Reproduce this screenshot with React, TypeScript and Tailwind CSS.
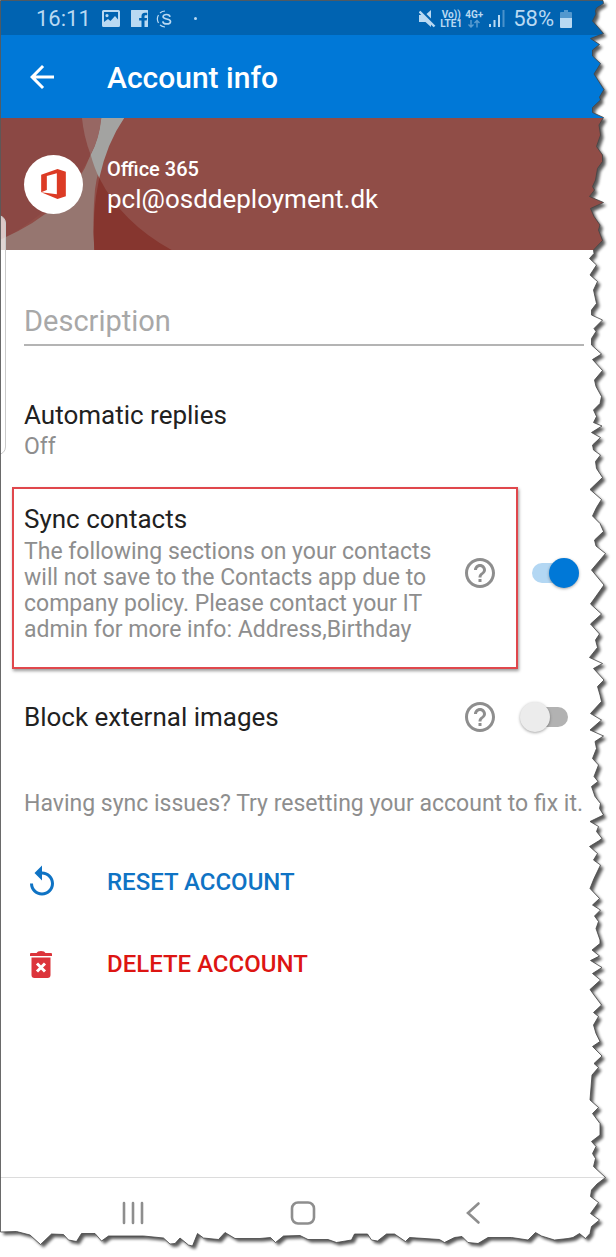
import { useState } from "react";
import { MdArrowBack, MdHelpOutline, MdReplay } from "react-icons/md";

const TORN_EDGE =
  "0.5,0.5 603,0.5 603.5,3.5 596.5,8 595.5,11 596,14 592.5,21 597,26 603.5,33.5 590.5,38.5 599.5,44.5 592.5,50 592.5,56 600.5,63.5 594,74 604,89.5 599.5,97 600.5,100 592.5,107.5 592.5,112.5 603.5,117.5 599,125 600.5,135 596.5,146.5 602.5,155 602.5,161.5 597.5,168.5 595.5,180 592.5,186.5 594.5,190 589.5,196.5 603.5,202.5 590.5,208.5 594,216.5 600,225 598.5,230 602.5,240.5 593.5,250 594,253.5 589.5,258.5 596.5,265 590,275 597.5,281.5 593.5,290 596.5,303.5 591.5,310 591.5,315 602.5,320 594,328.5 596,331.5 591.5,338.5 591.5,345 601.5,354 592.5,359.5 602.5,370.5 594.5,380 596,386.5 601.5,396.5 600,403.5 593.5,410 596.5,416.5 593.5,422.5 602,426 591.5,432.5 600.5,437.5 592.5,445 593.5,450 600.5,455 595.5,461.5 596.5,468.5 602.5,477.5 590,489.5 601.5,499.5 596.5,507.5 592.5,516 600,523.5 603.5,531.5 594.5,540 596,546 605.5,553.5 591.5,570 604,585 590.5,604 601.5,614 590.5,624 599.5,634 595.5,640 597.5,647.5 589.5,657.5 602.5,663.5 593.5,668.5 604,680 597.5,686.5 600,695 601.5,701.5 590.5,713.5 601.5,720 590,730 603.5,736 595,741.5 596.5,748.5 592.5,758.5 598.5,765 594,776.5 598,781.5 591.5,786.5 595,796.5 600.5,803.5 599.5,808.5 603.5,815 590,821.5 598.5,826.5 596.5,831.5 602,838.5 598.5,841 589.5,846.5 597.5,853.5 593.5,860 600.5,865 594,878.5 590,888.5 599.5,898.5 592.5,905 600.5,910 594.5,916 598.5,921.5 596,928.5 600,940 600,943.5 592,950 599.5,956 590.5,960.5 602,967.5 592.5,973.5 600.5,980 590,989.5 594,995 601.5,1005 593.5,1012.5 598.5,1016.5 593.5,1025 596,1033.5 600,1041.5 592.5,1046.5 602,1056 594,1063.5 598.5,1067.5 592,1075 590,1100 598.5,1107.5 592.5,1113.5 600,1123.5 600,1135 591.5,1141.5 596,1146.5 592.5,1153.5 595.5,1158.5 593.5,1166.5 605.5,1177.5 597,1184 591.5,1190 590.5,1196.5 598.5,1202.5 590.5,1213.5 599.5,1220 591.5,1226.5 590,1233.5 585.5,1238.5 579.5,1233.5 573,1237.5 568,1238.5 554.5,1240 541.5,1236 535.5,1232.5 528,1240 511.5,1237.5 488,1237.5 478,1243.5 468,1242.5 462,1236.5 454.5,1237.5 444.5,1242.5 439.5,1239.5 409.5,1237.5 405.5,1241.5 394.5,1234 386.5,1234 377.5,1241 371.5,1240 367.5,1234 354.5,1234 351.5,1240 336.5,1242.5 328,1239.5 308,1239.5 300,1235.5 283.5,1236 275.5,1242.5 270.5,1237.5 260,1238.5 235,1238.5 225,1232.5 218.5,1239.5 203.5,1238 197.5,1233.5 192.5,1246 188.5,1245 180,1238 175,1243.5 170,1244 163.5,1238 143.5,1236 108.5,1236 101.5,1241 95,1233.5 81.5,1233.5 76.5,1241.5 68.5,1240 63.5,1234.5 51.5,1234 40.5,1244.5 30,1235 16.5,1231.5 0.5,1232";

function TornEdge() {
  return (
    <svg
      className="pointer-events-none absolute inset-0 h-full w-full"
      viewBox="0 0 616 1257"
      preserveAspectRatio="none"
      aria-hidden="true"
    >
      <defs>
        <mask id="outside">
          <rect width="616" height="1257" fill="white" />
          <polygon points={TORN_EDGE} fill="black" />
        </mask>
        <filter id="soft" x="-5%" y="-5%" width="110%" height="110%">
          <feGaussianBlur stdDeviation="1.8" />
        </filter>
      </defs>
      <g mask="url(#outside)">
        <rect width="616" height="1257" fill="white" />
        <polygon points={TORN_EDGE} fill="#000" opacity="0.65" filter="url(#soft)" transform="translate(3 3)" />
      </g>
      <polygon points={TORN_EDGE} fill="none" stroke="#444" strokeWidth="0.8" />
    </svg>
  );
}

function StatusBar() {
  return (
    <div className="flex h-[35px] items-center justify-between bg-[#0063b1] pl-9 pr-11 pt-0.5 text-[#b9d9f2]">
      <div className="flex items-center">
        <span className="w-[54px] text-[22px]">16:11</span>
        <svg className="ml-3 h-[17px] w-[18px]" viewBox="0 0 18 17" aria-hidden="true">
          <path
            fill="currentColor"
            fillRule="evenodd"
            d="M1.500 0h15A1.500 1.500 0 0 1 18 1.500v14a1.500 1.500 0 0 1-1.500 1.500h-15A1.500 1.500 0 0 1 0 15.500v-14A1.500 1.500 0 0 1 1.500 0zM2 2v10l4-3 2.500 2L13 6l3 3.500V2zM5 4a1.600 1.600 0 1 1 0 3.200A1.600 1.600 0 0 1 5 4z"
          />
        </svg>
        <svg className="ml-[11px] h-[17px] w-[17px]" viewBox="0 0 17 17" aria-hidden="true">
          <path
            fill="currentColor"
            d="M.5 0h16a.5.5 0 0 1 .5.500v16a.5.5 0 0 1-.5.500h-3v-6.500h2.200l.4-2.600h-2.600V6.600c0-.9.400-1.300 1.300-1.300h1.400V2.700H14C11.500 2.700 10.500 4 10.500 6.200v1.700H8.100v2.600h2.400V17H.5a.5.5 0 0 1-.5-.500V.5A.5.500 0 0 1 .5 0z"
          />
        </svg>
        <svg
          className="ml-2 h-[18px] w-[18px]"
          viewBox="0 0 18 18"
          fill="none"
          stroke="currentColor"
          aria-hidden="true"
        >
          <path d="M9 1a8 8 0 0 0-5 2M2.500 5a8 8 0 0 0 0 8M4 15a8 8 0 0 0 5 2" strokeWidth="1.200" />
          <path
            d="M14 6.800c-.2-1.500-1.500-2.300-3.500-2.300-2.200 0-3.400 1-3.400 2.300 0 3 7.400 1.400 7.400 4.600 0 1.500-1.500 2.500-3.800 2.500-2.200 0-3.700-.9-3.900-2.600"
            strokeWidth="1.700"
          />
        </svg>
        <span className="ml-5 h-[3px] w-[3px] rounded-full bg-current" />
      </div>
      <div className="flex items-center">
        <svg className="mr-1 h-[18px] w-[17px]" viewBox="0 0 17 18" fill="currentColor" aria-hidden="true">
          <path d="M12 0v8.500L7.500 4z" />
          <path d="M0 5h3.500L12 13.500V17L6.500 12H0z" />
          <path d="M.5 1.500L15.500 16.500" stroke="currentColor" strokeWidth="2.400" />
        </svg>
        <div className="flex flex-col text-[10px] leading-[9px] font-bold">
          <span className="text-center">Vo))</span>
          <span>LTE1</span>
        </div>
        <div className="ml-[3px] flex flex-col items-center">
          <span className="text-[10px] leading-[9px] font-bold">4G+</span>
          <svg
            className="h-[9px] w-[14px] opacity-50"
            viewBox="0 0 14 9"
            fill="none"
            stroke="currentColor"
            strokeWidth="1.400"
            aria-hidden="true"
          >
            <path d="M4 1v7M1.500 5.500L4 8l2.500-2.500M10 8.500V1.500M7.500 4L10 1.500 12.500 4" />
          </svg>
        </div>
        <svg className="ml-1.5 h-[17px] w-4" viewBox="0 0 16 17" fill="currentColor" aria-hidden="true">
          <path d="M0 14h2v3H0zM4.500 10h2v7h-2zM9 5h2v12H9z" />
          <path d="M13.500 0h2v17h-2z" opacity="0.4" />
        </svg>
        <span className="ml-2 text-[22px]">58%</span>
        <svg className="ml-1.5 h-[18px] w-3" viewBox="0 0 12 18" fill="currentColor" aria-hidden="true">
          <path d="M4 0h4v2h3a1 1 0 0 1 1 1v5H0V3a1 1 0 0 1 1-1h3z" opacity="0.45" />
          <path d="M0 8h12v9a1 1 0 0 1-1 1H1a1 1 0 0 1-1-1z" />
        </svg>
      </div>
    </div>
  );
}

function AccountBanner() {
  return (
    <section className="relative flex h-[132px] items-center bg-[#904d47] pl-6 text-white">
      <svg className="absolute left-0 top-0 h-full w-[308px]" viewBox="0 24 924 398" aria-hidden="true">
        <path d="M0 24H303Q285 220 18 384L0 390z" fill="#8b4844" />
        <path d="M303 24H372Q300 120 284 240Q276 330 282 422H0V390Q210 300 271 135Q298 85 303 24z" fill="#967670" />
        <path d="M303 24H372Q320 100 297 205Q282 175 271 135Q295 90 303 24z" fill="#a3a3a1" />
        <path d="M245 24H303Q298 85 271 135Q250 80 245 24z" fill="#976763" />
        <path d="M297 205Q365 340 515 422H282Q274 310 297 205z" fill="#86362f" />
      </svg>
      <div className="relative flex h-[59px] w-[59px] items-center justify-center rounded-full bg-white">
        <svg className="h-[30px] w-[25px]" viewBox="123 178 74 90" aria-hidden="true">
          <path
            fill="#dc3b25"
            d="M123 195L172 178L197 186V260L172 268L123 248L170 254V191L140 199V241L123 248z"
          />
        </svg>
      </div>
      <div className="relative ml-6 pt-1.5">
        <p className="text-[20px] leading-6 font-medium">Office 365</p>
        <p className="text-[26px] leading-9">pcl@osddeployment.dk</p>
      </div>
    </section>
  );
}

function Switch({ id, checked, onChange }) {
  return (
    <input
      id={id}
      type="checkbox"
      role="switch"
      checked={checked}
      onChange={(e) => onChange(e.target.checked)}
      className="relative h-[30px] w-[60px] shrink-0 cursor-pointer appearance-none before:absolute before:left-2 before:top-[5px] before:h-5 before:w-10 before:rounded-full before:bg-[#b2b2b2] after:absolute after:left-0 after:top-0 after:h-[30px] after:w-[30px] after:rounded-full after:bg-[#ececec] after:shadow-[0_1px_3px_rgba(0,0,0,0.35)] checked:before:left-3 checked:before:bg-[#b3d7f3] checked:after:left-[29px] checked:after:bg-[#0078d7]"
    />
  );
}

function HelpButton({ label }) {
  return (
    <button type="button" aria-label={label} className="mr-[22px] shrink-0 text-[#8e8e8e]">
      <MdHelpOutline className="h-9 w-9" />
    </button>
  );
}

function NavBar() {
  return (
    <nav className="mt-auto flex h-20 items-start justify-center gap-36 border-t border-[#dcdcdc] pr-2.5 pt-[22px] text-[#8e8e8e]">
      <button type="button" aria-label="Recent apps">
        <svg className="h-[26px] w-[26px]" viewBox="0 0 26 26" stroke="currentColor" strokeWidth="2.600" strokeLinecap="round">
          <path d="M4 3v20M13 3v20M22 3v20" />
        </svg>
      </button>
      <button type="button" aria-label="Home">
        <svg className="h-[26px] w-[26px]" viewBox="0 0 26 26" fill="none" stroke="currentColor" strokeWidth="2.600">
          <rect x="2" y="2.500" width="22" height="21" rx="6" />
        </svg>
      </button>
      <button type="button" aria-label="Back">
        <svg className="h-[26px] w-[26px]" viewBox="0 0 26 26" fill="none" stroke="currentColor" strokeWidth="2.600" strokeLinecap="round">
          <path d="M18.500 3.500L8 13l10.500 9.500" />
        </svg>
      </button>
    </nav>
  );
}

function App() {
  const [description, setDescription] = useState("");
  const [syncContacts, setSyncContacts] = useState(true);
  const [blockImages, setBlockImages] = useState(false);

  return (
    <div className="relative flex min-h-screen w-full flex-col overflow-hidden bg-white font-[Roboto,sans-serif] text-[#212121]">
      <StatusBar />

      <header className="flex h-[83px] items-center bg-[#0078d7] pl-6 text-white">
        <button type="button" aria-label="Back to settings" className="w-[83px]">
          <MdArrowBack className="h-9 w-9" />
        </button>
        <h1 className="pt-0.5 text-[30px] font-medium">Account info</h1>
      </header>

      <AccountBanner />

      {/* Edge panel handle */}
      <div className="absolute -left-1 top-[215px] h-60 w-[10px] rounded-r-lg border border-[#c9c9c9] bg-white/70" />

      <main className="flex flex-col pl-6 pr-8">
        <input
          type="text"
          aria-label="Description"
          placeholder="Description"
          value={description}
          onChange={(e) => setDescription(e.target.value)}
          className="mt-12 h-12 border-b-2 border-[#b4b4b4] text-[29px] outline-none placeholder:text-[#a8a8a8]"
        />

        <section className="mt-[53px]">
          <h2 className="text-[26px] leading-8">Automatic replies</h2>
          <p className="text-[23px] leading-8 text-[#8e8e8e]">Off</p>
        </section>

        <section className="relative mt-10 flex items-center pr-1">
          {/* Highlight frame */}
          <div className="pointer-events-none absolute -left-3 -top-4 -bottom-[26px] right-[66px] border-2 border-[#e0474c] shadow-[1px_2px_3px_rgba(0,0,0,0.4)]" />
          <div className="flex-1">
            <label htmlFor="sync" className="block text-[26px] leading-8">
              Sync contacts
            </label>
            <p className="mt-1 max-w-[420px] text-[23px] leading-[26px] text-[#8e8e8e]">
              The following sections on your contacts will not save to the Contacts app due to company policy.
              Please contact your IT admin for more info: Address,Birthday
            </p>
          </div>
          <HelpButton label="About contact sync" />
          <Switch id="sync" checked={syncContacts} onChange={setSyncContacts} />
        </section>

        <section className="mt-14 flex items-center pr-1">
          <label htmlFor="images" className="flex-1 text-[26px] leading-8">
            Block external images
          </label>
          <HelpButton label="About external images" />
          <Switch id="images" checked={blockImages} onChange={setBlockImages} />
        </section>

        <p className="mt-[53px] whitespace-nowrap text-[23px] leading-8 text-[#8e8e8e]">
          Having sync issues? Try resetting your account to fix it.
        </p>

        <button type="button" className="mt-[42px] flex h-10 items-center text-[24px] font-medium text-[#0f73c4]">
          <span className="w-[83px]">
            <MdReplay className="h-9 w-9" />
          </span>
          RESET ACCOUNT
        </button>
        <button type="button" className="mt-[42px] flex h-10 items-center text-[24px] font-medium text-[#dd1512]">
          <span className="w-[83px] pl-1.5">
            <svg className="h-[27px] w-[22px]" viewBox="0 0 22 27" aria-hidden="true">
              <path
                fill="#dc343b"
                d="M1 2h5.500L8 .5Q11-.3 14 .5L15.500 2H21a1 1 0 0 1 1 1v2H0V3a1 1 0 0 1 1-1zM1.500 6.500h19V24a3 3 0 0 1-3 3h-13a3 3 0 0 1-3-3z"
              />
              <path d="M7 12.500l8 8M15 12.500l-8 8" stroke="white" strokeWidth="3" />
            </svg>
          </span>
          DELETE ACCOUNT
        </button>
      </main>

      <NavBar />
      <TornEdge />
    </div>
  );
}

export default App;
